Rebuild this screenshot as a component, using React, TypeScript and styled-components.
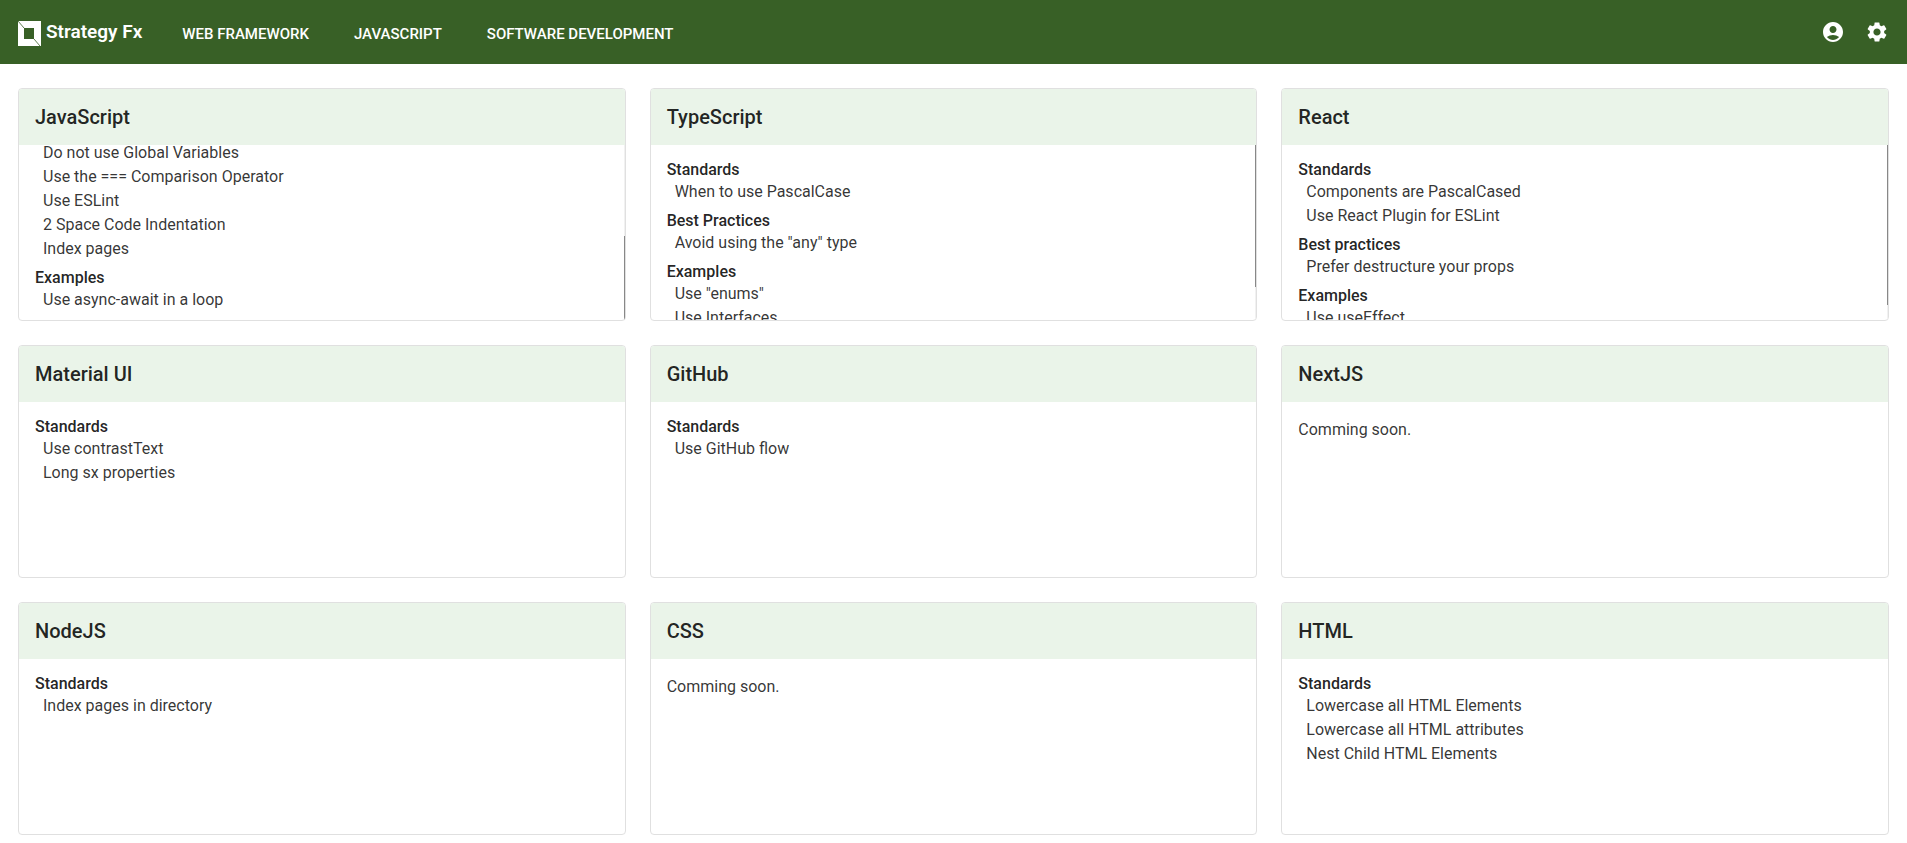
import { useLayoutEffect, useRef } from 'react';
import styled, { createGlobalStyle } from 'styled-components';
import { MdAccountCircle, MdSettings } from 'react-icons/md';

const GlobalStyle = createGlobalStyle`
  *, *::before, *::after { box-sizing: border-box; }
  body {
    margin: 0;
    background: #fff;
    color: rgba(0, 0, 0, 0.87);
    font-family: Roboto, sans-serif;
    font-size: 16px;
    line-height: 24px;
  }
`;

const AppBar = styled.header`
  display: flex;
  align-items: center;
  height: 64px;
  padding: 0 18px;
  background: #386026;
  color: #fff;
`;

const Brand = styled.a`
  display: flex;
  align-items: center;
  gap: 5px;
  color: inherit;
  font-size: 19px;
  font-weight: 600;
  text-decoration: none;
`;

const BrandMark = styled.svg`
  display: block;
  width: 23px;
  height: 25px;
  margin-top: 3px;
`;

const Nav = styled.nav`
  display: flex;
  gap: 45px;
  margin-left: 40px;
`;

const NavLink = styled.a`
  padding-top: 4px;
  color: inherit;
  font-size: 15px;
  font-weight: 500;
  text-decoration: none;
  text-transform: uppercase;
`;

const Actions = styled.div`
  display: flex;
  gap: 20px;
  margin-left: auto;
`;

const IconButton = styled.button`
  display: flex;
  padding: 0;
  border: 0;
  background: none;
  color: inherit;
  font-size: 24px;
  cursor: pointer;
`;

const Board = styled.main`
  display: grid;
  grid-template-columns: repeat(3, minmax(0, 1fr));
  gap: 24px;
  padding: 24px 18px 8px;
`;

const Card = styled.section`
  overflow: hidden;
  border: 1px solid #e0e0e0;
  border-radius: 4px;
`;

const CardTitle = styled.h2`
  margin: 0;
  padding: 16px;
  background: #eaf4e9;
  font-size: 20px;
  font-weight: 500;
  line-height: 24px;
`;

const CardBody = styled.div`
  position: relative;
`;

const Scroller = styled.div`
  height: 175px;
  overflow-y: auto;
  scrollbar-width: none;
`;

const ScrollTrack = styled.div`
  position: absolute;
  top: 0;
  right: 0;
  bottom: 0;
  display: flex;
  flex-direction: column;
  width: 1px;
  background: #f1f1f1;
`;

const ScrollThumb = styled.div<{ $extent: number; $atEnd: boolean }>`
  height: calc(175 / ${(p) => p.$extent} * 100%);
  margin-top: ${(p) => (p.$atEnd ? 'auto' : '0')};
  background: #888;
`;

const Content = styled.div<{ $extent: number }>`
  display: flex;
  flex-direction: column;
  gap: 8px;
  min-height: ${(p) => p.$extent}px;
  padding: 16px 16px 8px;
`;

const Group = styled.section<{ $last: boolean }>`
  margin-top: ${(p) => (p.$last ? 'auto' : '0')};
`;

const GroupTitle = styled.h3`
  margin: 0;
  padding-bottom: 2px;
  font-size: 16px;
  font-weight: 500;
  line-height: 17px;
`;

const Topics = styled.ul`
  margin: 0;
  padding: 0 0 0 8px;
  color: rgba(0, 0, 0, 0.8);
  list-style: none;
`;

const Topic = styled.li`
  font-weight: 400;
`;

const Notice = styled.p`
  margin: 0;
  color: rgba(0, 0, 0, 0.8);
`;

type TopicGroup = { title?: string; topics: string[] };
type Guide = { name: string; groups: TopicGroup[]; extent?: number; atEnd?: boolean };

const guides: Guide[] = [
  {
    name: 'JavaScript',
    extent: 365,
    atEnd: true,
    groups: [
      {
        topics: [
          'Do not use Global Variables',
          'Use the === Comparison Operator',
          'Use ESLint',
          '2 Space Code Indentation',
          'Index pages',
        ],
      },
      { title: 'Examples', topics: ['Use async-await in a loop'] },
    ],
  },
  {
    name: 'TypeScript',
    extent: 216,
    groups: [
      { title: 'Standards', topics: ['When to use PascalCase'] },
      { title: 'Best Practices', topics: ['Avoid using the "any" type'] },
      { title: 'Examples', topics: ['Use "enums"', 'Use Interfaces'] },
    ],
  },
  {
    name: 'React',
    extent: 191,
    groups: [
      { title: 'Standards', topics: ['Components are PascalCased', 'Use React Plugin for ESLint'] },
      { title: 'Best practices', topics: ['Prefer destructure your props'] },
      { title: 'Examples', topics: ['Use useEffect'] },
    ],
  },
  { name: 'Material UI', groups: [{ title: 'Standards', topics: ['Use contrastText', 'Long sx properties'] }] },
  { name: 'GitHub', groups: [{ title: 'Standards', topics: ['Use GitHub flow'] }] },
  { name: 'NextJS', groups: [] },
  { name: 'NodeJS', groups: [{ title: 'Standards', topics: ['Index pages in directory'] }] },
  { name: 'CSS', groups: [] },
  {
    name: 'HTML',
    groups: [
      {
        title: 'Standards',
        topics: ['Lowercase all HTML Elements', 'Lowercase all HTML attributes', 'Nest Child HTML Elements'],
      },
    ],
  },
];

function GuideCard({ name, groups, extent = 0, atEnd = false }: Guide) {
  const body = useRef<HTMLDivElement>(null);

  useLayoutEffect(() => {
    if (atEnd && body.current) body.current.scrollTop = body.current.scrollHeight;
  }, [atEnd]);

  return (
    <Card>
      <CardTitle>{name}</CardTitle>
      <CardBody>
        <Scroller ref={body}>
          <Content $extent={extent}>
            {groups.length === 0 && <Notice>Comming soon.</Notice>}
            {groups.map((group, i) => (
              <Group key={i} $last={atEnd && i === 0}>
                {group.title && <GroupTitle>{group.title}</GroupTitle>}
                <Topics>
                  {group.topics.map((topic) => (
                    <Topic key={topic}>{topic}</Topic>
                  ))}
                </Topics>
              </Group>
            ))}
          </Content>
        </Scroller>
        {extent > 0 && (
          <ScrollTrack>
            <ScrollThumb $extent={extent} $atEnd={atEnd} />
          </ScrollTrack>
        )}
      </CardBody>
    </Card>
  );
}

export default function App() {
  return (
    <>
      <GlobalStyle />
      <AppBar>
        <Brand href="#">
          <BrandMark viewBox="0 0 23 25" aria-hidden="true">
            <path fill="#fff" fillRule="evenodd" d="M0 0H23V25H0ZM6 7V18H16V7Z" />
            <path stroke="#386026" strokeWidth="0.8" d="M0 0L6 7M16 18L22 25" />
          </BrandMark>
          Strategy Fx
        </Brand>
        <Nav>
          <NavLink href="#web">Web Framework</NavLink>
          <NavLink href="#javascript">JavaScript</NavLink>
          <NavLink href="#software">Software Development</NavLink>
        </Nav>
        <Actions>
          <IconButton type="button" aria-label="Account"><MdAccountCircle /></IconButton>
          <IconButton type="button" aria-label="Settings"><MdSettings /></IconButton>
        </Actions>
      </AppBar>
      <Board>
        {guides.map((guide) => (
          <GuideCard key={guide.name} {...guide} />
        ))}
      </Board>
    </>
  );
}
